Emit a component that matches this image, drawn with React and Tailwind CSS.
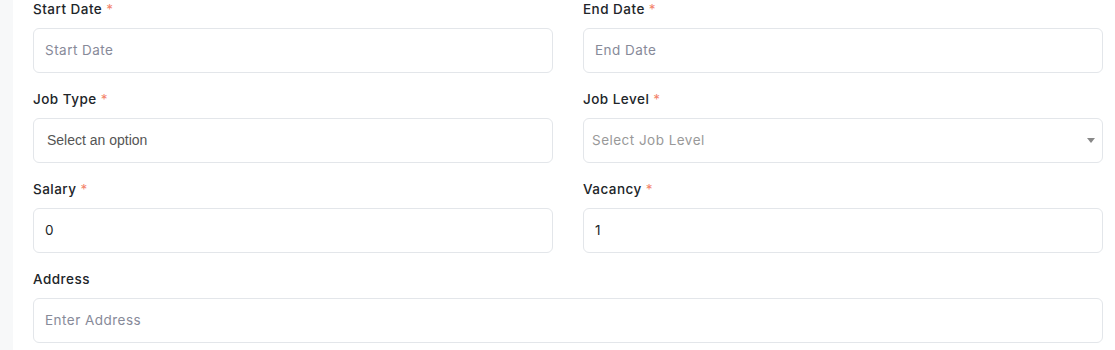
import React from "react";

const font = { fontFamily: "Inter, 'Open Sans', sans-serif" };

function Label({ children, required }) {
  return (
    <div className="h-[19px] mb-[9px] flex items-center text-[13.5px] font-medium text-[#212529] leading-none tracking-[0.035em]" style={font}>
      <span>{children}</span>
      {required && <span className="ml-[4px] text-[#f3846c] font-normal">*</span>}
    </div>
  );
}

function TextInput({ placeholder, value }) {
  return (
    <div
      className={`h-[45px] rounded-[6px] border border-[#e3e6ea] bg-white flex items-center px-[11px] text-[13.5px] tracking-[0.035em] ${value ? "text-[#212529]" : "text-[#878a99]"}`}
      style={font}
    >
      {value ?? placeholder}
    </div>
  );
}

function Field({ label, required, children, full }) {
  return (
    <div className={full ? "col-span-2" : ""}>
      <Label required={required}>{label}</Label>
      {children}
    </div>
  );
}

export default function App() {
  return (
    <div className="w-[1115px] h-[350px] flex bg-white overflow-hidden">
      <div className="w-[13px] shrink-0 bg-[#f7f8f9]" />
      <div className="flex-1 pl-[20px] pr-[12px] grid grid-cols-2 gap-x-[30px] gap-y-[17px] content-start">
        <Field label="Start Date" required>
          <TextInput placeholder="Start Date" />
        </Field>
        <Field label="End Date" required>
          <TextInput placeholder="End Date" />
        </Field>
        <Field label="Job Type" required>
          <div
            className="h-[45px] rounded-[6px] border border-[#e3e6ea] bg-white flex items-center px-[13px] text-[14px] text-[#555]"
            style={{ fontFamily: "'Liberation Sans', Arial, sans-serif" }}
          >
            Select an option
          </div>
        </Field>
        <Field label="Job Level" required>
          <div
            className="h-[45px] rounded-[6px] border border-[#e3e6ea] bg-white flex items-center justify-between pl-[8px] pr-[7px] text-[13.5px] tracking-[0.035em] text-[#999]"
            style={font}
          >
            <span>Select Job Level</span>
            <span className="w-0 h-0 border-l-[4px] border-r-[4px] border-t-[5px] border-l-transparent border-r-transparent border-t-[#888]" />
          </div>
        </Field>
        <Field label="Salary" required>
          <TextInput value="0" />
        </Field>
        <Field label="Vacancy" required>
          <TextInput value="1" />
        </Field>
        <Field label="Address" full>
          <TextInput placeholder="Enter Address" />
        </Field>
      </div>
    </div>
  );
}
